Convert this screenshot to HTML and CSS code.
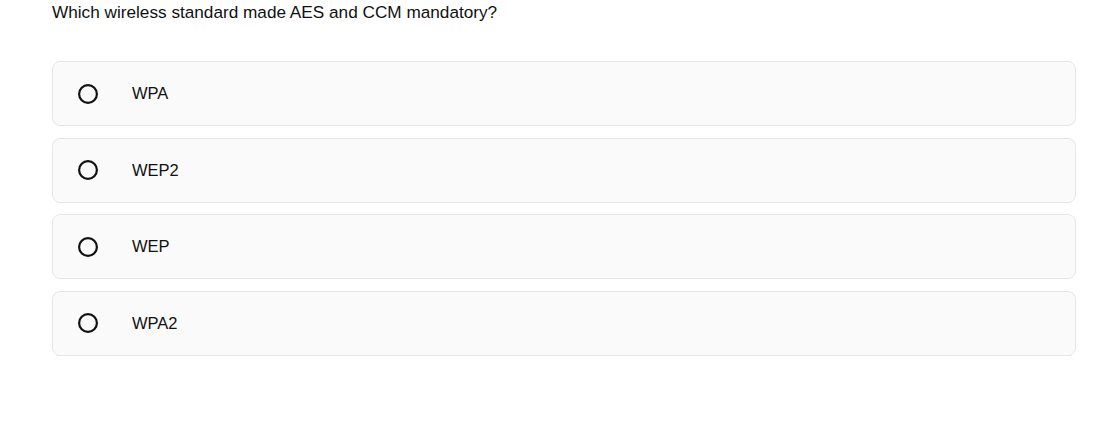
FILE: index.html
```html
<!DOCTYPE html>
<html>
<head>
<meta charset="utf-8">
<link rel="stylesheet" href="styles.css">
</head>
<body>
<div class="quiz">
  <p class="question">Which wireless standard made AES and CCM mandatory?</p>
  <div class="options">
    <label class="option"><svg class="radio" viewBox="0 0 20 20" width="20" height="20"><circle cx="10" cy="10" r="8.9" fill="none" stroke="#111111" stroke-width="2.2"/></svg><span class="label">WPA</span></label>
    <label class="option"><svg class="radio" viewBox="0 0 20 20" width="20" height="20"><circle cx="10" cy="10" r="8.9" fill="none" stroke="#111111" stroke-width="2.2"/></svg><span class="label">WEP2</span></label>
    <label class="option"><svg class="radio" viewBox="0 0 20 20" width="20" height="20"><circle cx="10" cy="10" r="8.9" fill="none" stroke="#111111" stroke-width="2.2"/></svg><span class="label">WEP</span></label>
    <label class="option"><svg class="radio" viewBox="0 0 20 20" width="20" height="20"><circle cx="10" cy="10" r="8.9" fill="none" stroke="#111111" stroke-width="2.2"/></svg><span class="label">WPA2</span></label>
  </div>
</div>
</body>
</html>
```
FILE: styles.css
```css
html, body {
  margin: 0;
  padding: 0;
  background: #ffffff;
}
body {
  font-family: "Liberation Sans", Arial, sans-serif;
  color: #111111;
}
.quiz {
  padding: 0 29px 0 52px;
}
.question {
  margin: 0;
  padding-top: 2px;
  font-size: 17.2px;
  line-height: 20px;
  color: #111111;
}
.options {
  margin-top: 39px;
  display: flex;
  flex-direction: column;
  gap: 11.67px;
}
.option {
  box-sizing: border-box;
  display: flex;
  align-items: center;
  height: 65px;
  padding-left: 25px;
  background: #fafafa;
  border: 1px solid #e4e6ea;
  border-radius: 8px;
}
.radio {
  display: block;
  flex: none;
}
.label {
  margin-left: 34px;
  font-size: 16.5px;
  color: #111111;
}
```
